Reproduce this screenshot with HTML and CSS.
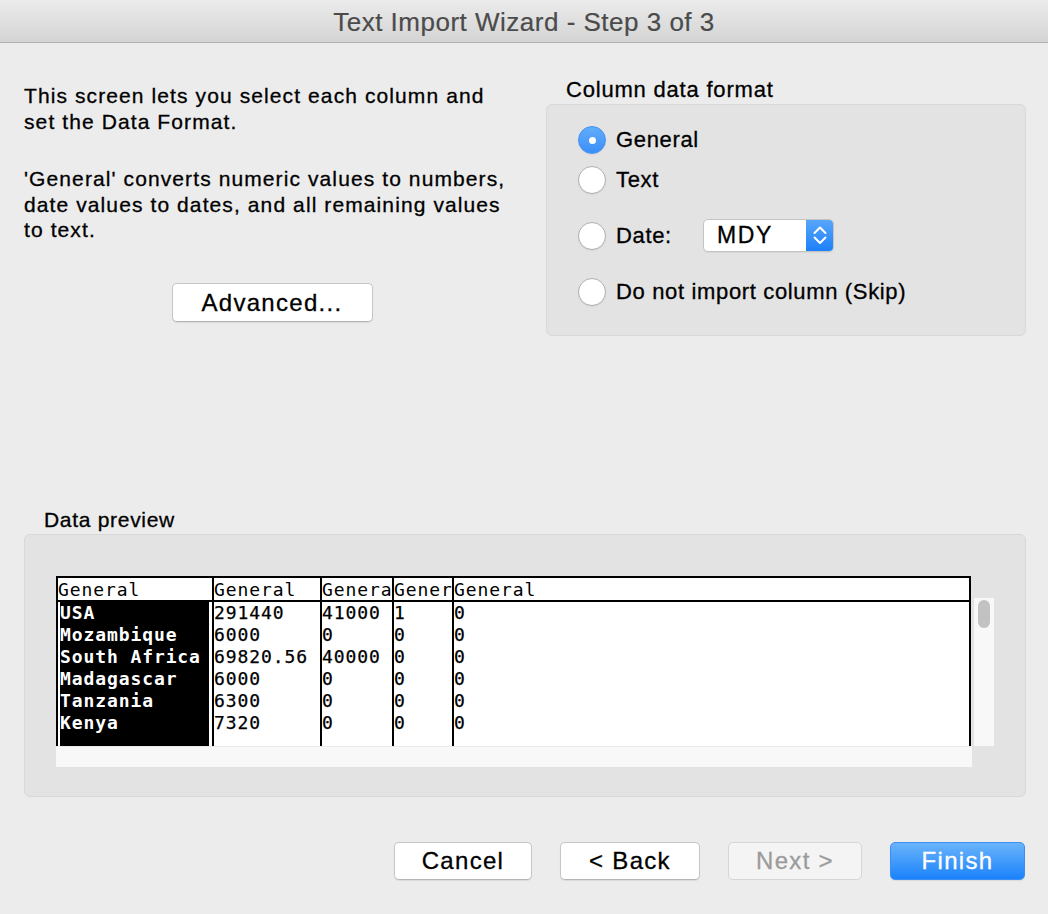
FILE: index.html
```html
<!DOCTYPE html>
<html>
<head>
<meta charset="utf-8">
<title>Text Import Wizard</title>
<link rel="stylesheet" href="styles.css">
</head>
<body>
<div class="window">
  <div class="titlebar"><span class="title">Text Import Wizard - Step 3 of 3</span></div>
  <div class="content">
    <div class="top">
      <div class="left">
        <p class="para p1">This screen lets you select each column and<br>set the Data Format.</p>
        <p class="para p2">'General' converts numeric values to numbers,<br>date values to dates, and all remaining values<br>to text.</p>
        <div class="adv-wrap"><button class="btn adv">Advanced...</button></div>
      </div>
      <div class="right">
        <div class="group-label">Column data format</div>
        <div class="group">
          <div class="radio-row"><span class="radio on"></span><span class="rlabel">General</span></div>
          <div class="radio-row r-text"><span class="radio"></span><span class="rlabel">Text</span></div>
          <div class="radio-row r-date"><span class="radio"></span><span class="rlabel date-label">Date:</span>
            <div class="popup"><span class="popup-text">MDY</span>
              <span class="stepper"><svg width="28" height="33" viewBox="0 0 28 33"><path d="M8.5 14 L14 8.5 L19.5 14" fill="none" stroke="#fff" stroke-width="2" stroke-linecap="round" stroke-linejoin="round"/><path d="M8.5 18.5 L14 24 L19.5 18.5" fill="none" stroke="#fff" stroke-width="2" stroke-linecap="round" stroke-linejoin="round"/></svg></span>
            </div>
          </div>
          <div class="radio-row r-skip"><span class="radio"></span><span class="rlabel">Do not import column (Skip)</span></div>
        </div>
      </div>
    </div>

    <div class="preview">
      <div class="group-label preview-label">Data preview</div>
      <div class="preview-box">
        <div class="grid-row">
          <div class="table">
            <div class="col c1">
              <div class="hcell">General</div>
              <div class="body sel">USA<br>Mozambique<br>South Africa<br>Madagascar<br>Tanzania<br>Kenya</div>
            </div>
            <div class="col c2">
              <div class="hcell">General</div>
              <div class="body">291440<br>6000<br>69820.56<br>6000<br>6300<br>7320</div>
            </div>
            <div class="col c3">
              <div class="hcell">General</div>
              <div class="body">41000<br>0<br>40000<br>0<br>0<br>0</div>
            </div>
            <div class="col c4">
              <div class="hcell">General</div>
              <div class="body">1<br>0<br>0<br>0<br>0<br>0</div>
            </div>
            <div class="col c5">
              <div class="hcell">General</div>
              <div class="body">0<br>0<br>0<br>0<br>0<br>0</div>
            </div>
          </div>
          <div class="vscroll"><div class="thumb"></div></div>
        </div>
        <div class="hscroll"></div>
      </div>
    </div>

    <div class="buttons">
      <button class="btn b-cancel">Cancel</button>
      <button class="btn b-back">&lt; Back</button>
      <button class="btn b-next" disabled>Next &gt;</button>
      <button class="btn b-finish">Finish</button>
    </div>
  </div>
</div>
</body>
</html>
```

FILE: styles.css
```css
* { box-sizing: border-box; }
html, body { margin: 0; padding: 0; }
body {
  background: #ececec;
  font-family: "Liberation Sans", Arial, sans-serif;
  color: #000;
  width: 1048px;
  height: 914px;
  overflow: hidden;
}
.window { width: 1048px; height: 914px; background: #ececec; }

.titlebar {
  height: 43px;
  background: linear-gradient(#ebebeb, #d4d4d4);
  border-bottom: 1px solid #b1b1b1;
  display: flex;
  align-items: center;
  justify-content: center;
}
.title {
  font-size: 26px;
  letter-spacing: 0.5px;
  color: #4b4b4b;
  line-height: 42px;
  padding-top: 1px;
  -webkit-text-stroke: 0.2px #4b4b4b;
}

.content { padding: 34px 22px 0 24px; }

.top {
  display: grid;
  grid-template-columns: 496px 480px;
  column-gap: 26px;
  height: 259px;
}

.para {
  margin: 0;
  font-size: 21px;
  line-height: 25.5px;
  letter-spacing: 1.1px;
  -webkit-text-stroke: 0.3px #000;
}
.p1 { margin-top: 6px; }
.p2 { margin-top: 32px; }
.adv-wrap { display: flex; justify-content: center; margin-top: 40px; }

.btn {
  font-family: "Liberation Sans", Arial, sans-serif;
  font-size: 24px;
  letter-spacing: 1.3px;
  background: #fff;
  border: 1px solid #c6c6c6;
  border-bottom-color: #b4b4b4;
  border-radius: 5px;
  box-shadow: 0 1px 1px rgba(0,0,0,0.08);
  color: #000;
  padding: 0;
  height: 38px;
  line-height: 36px;
  -webkit-text-stroke: 0.3px currentColor;
}
.adv { width: 201px; height: 39px; line-height: 37px; }

.group-label {
  font-size: 22px;
  line-height: 26px;
  letter-spacing: 0.8px;
  margin-bottom: 1px;
  -webkit-text-stroke: 0.3px #000;
}
.right .group-label { padding-left: 20px; }

.group {
  height: 232px;
  background: #e3e3e3;
  border: 1px solid #d8d8d8;
  border-radius: 6px;
  padding: 21px 0 0 31px;
}
.radio-row {
  display: flex;
  align-items: center;
  height: 28px;
}
.r-text { margin-top: 12px; }
.r-date { margin-top: 25px; height: 33px; }
.r-skip { margin-top: 26px; }

.radio {
  width: 28px;
  height: 28px;
  border-radius: 50%;
  background: #fff;
  border: 1px solid #b0b0b0;
  box-shadow: 0 1px 1px rgba(0,0,0,0.06);
  flex: none;
  display: flex;
  align-items: center;
  justify-content: center;
}
.radio.on {
  background: linear-gradient(#62acfb, #3a8ff6);
  border-color: #3f92f4;
}
.radio.on::after {
  content: "";
  width: 7px;
  height: 7px;
  border-radius: 50%;
  background: #fff;
}
.rlabel {
  margin-left: 10px;
  font-size: 22px;
  letter-spacing: 0.65px;
  line-height: 28px;
  -webkit-text-stroke: 0.3px #000;
}
.date-label { width: 87px; }

.popup {
  width: 131px;
  height: 33px;
  background: #fff;
  border: 1px solid #c4c4c4;
  border-radius: 5px;
  display: flex;
  align-items: center;
  overflow: hidden;
  box-shadow: 0 1px 1px rgba(0,0,0,0.06);
}
.popup-text {
  flex: 1;
  padding-left: 13px;
  font-size: 23px;
  letter-spacing: 1.6px;
  line-height: 31px;
  -webkit-text-stroke: 0.3px #000;
}
.stepper {
  width: 28px;
  height: 33px;
  background: linear-gradient(#5aa7fb, #1b7ff8);
  display: flex;
  align-items: center;
  justify-content: center;
  margin-right: -1px;
}
.stepper svg { display: block; }

.preview { margin-top: 171px; }
.preview-label { padding-left: 20px; letter-spacing: 0.7px; font-size: 21px; }
.preview-box {
  height: 263px;
  background: #e3e3e3;
  border: 1px solid #d8d8d8;
  border-radius: 6px;
  padding: 41px 0 0 31px;
}
.grid-row { display: flex; align-items: flex-start; }

.table {
  width: 915px;
  height: 170px;
  background: #fff;
  border: 2px solid #000;
  border-bottom: none;
  display: flex;
  overflow: hidden;
  font-family: "DejaVu Sans Mono", monospace;
  font-size: 18px;
  letter-spacing: 0.9px;
  line-height: 22px;
  color: #000;
}
.col {
  display: flex;
  flex-direction: column;
  overflow: hidden;
  white-space: nowrap;
}
.col + .col { border-left: 2px solid #000; }
.c1 { width: 154px; }
.c2 { width: 108px; }
.c3 { width: 72px; }
.c4 { width: 60px; }
.c5 { flex: 1; }
.hcell {
  height: 24px;
  padding-top: 1px;
  border-bottom: 2px solid #000;
  overflow: hidden;
  line-height: 21px;
}
.body { flex: 1; overflow: hidden; -webkit-text-stroke: 0.25px #000; }
.body.sel {
  background: #000;
  color: #fff;
  font-weight: bold;
  letter-spacing: 0.9px;
  margin: 0 3px 0 2px;
  -webkit-text-stroke: 0;
}

.vscroll {
  width: 20px;
  height: 148px;
  margin-left: 3px;
  margin-top: 22px;
  background: #f8f8f8;
  padding: 2px 0 0 4px;
}
.thumb {
  width: 12px;
  height: 28px;
  border-radius: 6px;
  background: #c2c2c2;
}
.hscroll {
  width: 916px;
  height: 21px;
  background: #f8f8f8;
  border-top: 1px solid #ebebeb;
}

.buttons {
  display: flex;
  justify-content: flex-end;
  gap: 28px;
  margin-top: 45px;
  padding-right: 1px;
}
.b-cancel { width: 138px; }
.b-back { width: 140px; }
.b-next {
  width: 134px;
  background: #f4f4f4;
  color: #9b9b9b;
  border-color: #d6d6d6;
  box-shadow: none;
}
.b-finish {
  width: 135px;
  background: linear-gradient(#6ab4fb, #1b82fb);
  border-color: #3b8ef5;
  color: #fff;
}
```
